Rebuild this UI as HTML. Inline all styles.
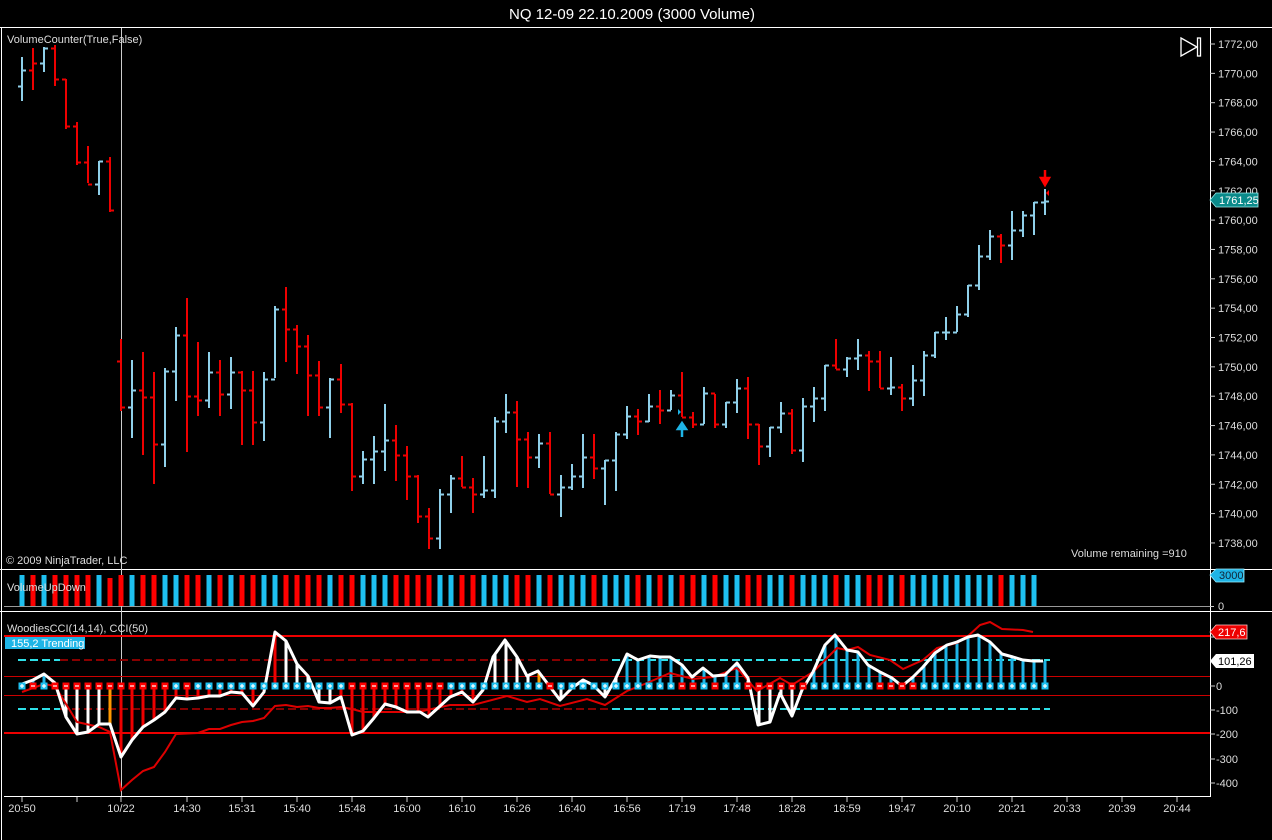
<!DOCTYPE html>
<html><head><meta charset="utf-8"><style>
html,body{margin:0;padding:0;background:#000;}
body{width:1272px;height:840px;overflow:hidden;position:relative;font-family:"Liberation Sans",Arial,sans-serif;}
svg{position:absolute;left:0;top:0;}
</style></head><body>
<svg id="s" width="1272" height="840" xmlns="http://www.w3.org/2000/svg" font-family="Liberation Sans, Arial, sans-serif">
<rect width="1272" height="840" fill="#000"/>
<text x="632" y="19" fill="#fff" font-size="15" text-anchor="middle">NQ 12-09  22.10.2009 (3000 Volume)</text>
<g stroke="#fff" stroke-width="1" fill="none">
<line x1="0" y1="27.5" x2="1272" y2="27.5"/>
<line x1="1.5" y1="27" x2="1.5" y2="840"/>
<line x1="0" y1="569.5" x2="1272" y2="569.5"/>
<line x1="0" y1="611.5" x2="1272" y2="611.5"/>
<line x1="1210.5" y1="28" x2="1210.5" y2="797"/>
<line x1="4" y1="796.5" x2="1211" y2="796.5"/>
</g>
<line x1="4" y1="606.5" x2="1210" y2="606.5" stroke="#999"/>
<line x1="121.5" y1="28" x2="121.5" y2="796" stroke="#ccc"/>
<g id="grid"></g>
<g id="bars"></g>
<g id="vol"></g>
<g id="cci"></g>
<g font-size="11" fill="#ddd">
<text x="7" y="43">VolumeCounter(True,False)</text>
<text x="6" y="564">© 2009 NinjaTrader, LLC</text>
<text x="1071" y="557">Volume remaining =910</text>
<text x="7" y="591">VolumeUpDown</text>
<text x="7" y="632">WoodiesCCI(14,14), CCI(50)</text>
</g>
<rect x="5" y="637" width="80" height="12" fill="#1eb4e6"/>
<text x="11" y="647" font-size="11" fill="#fff">155,2 Trending</text>
<g fill="none" stroke="#fff" stroke-width="1.3"><path d="M1181 38 L1197 47 L1181 56 Z"/><rect x="1197.5" y="38" width="3" height="18"/></g>
<g id="pax" font-size="11" fill="#ddd"></g>
<polygon points="1210,200 1216,193 1258,193 1258,207 1216,207" fill="#0a8a8a" stroke="#9ee" stroke-width="0.8"/>
<text x="1219" y="204" font-size="11" fill="#fff">1761,25</text>
<polygon points="1210,575 1216,569 1244,569 1244,582 1216,582" fill="#1eb4e6" stroke="#9ef" stroke-width="0.8"/>
<text x="1219" y="579" font-size="11" fill="#123">3000</text>
<line x1="1210" y1="606.5" x2="1214" y2="606.5" stroke="#ccc"/>
<text x="1218" y="610" font-size="11" fill="#ddd">0</text>
<g id="cax" font-size="11" fill="#ddd"></g>
<polygon points="1210,632 1216,625 1247,625 1247,639 1216,639" fill="#e00" stroke="#fcc" stroke-width="0.8"/>
<text x="1218" y="636" font-size="11" fill="#fff">217,6</text>
<polygon points="1210,661 1216,654 1254,654 1254,668 1216,668" fill="#fff"/>
<text x="1218" y="665" font-size="11" fill="#000">101,26</text>
<g id="xax" font-size="11" fill="#ddd"></g>
<path d="M1045 170 V179 M1041 178 L1045 185 L1049 178 Z" stroke="#f00" stroke-width="2.5" fill="#f00"/>
<path d="M1049 190 L1046 193 L1049 196 Z" fill="#f00"/>
<path d="M682 437 V428 M678 429 L682 423 L686 429 Z" stroke="#1eb4e6" stroke-width="2.5" fill="#1eb4e6"/>
<path d="M678 409 L681 412 L678 415 Z" fill="#1eb4e6"/>
</svg>
<script>
var NS="http://www.w3.org/2000/svg";
function el(p,t,a){var e=document.createElementNS(NS,t);for(var k in a)e.setAttribute(k,a[k]);p.appendChild(e);return e;}
var D=[[57,101,70,'b'],[48,90,63,'r'],[47,72,48,'b'],[45,86,79,'r'],[79,129,126,'r'],[122,165,162,'r'],[146,183,184,'r'],[161,195,161,'b'],[157,212,210,'r'],[339,411,407,'r'],[360,438,390,'b'],[352,455,397,'r'],[372,484,444,'r'],[368,467,371,'b'],[327,401,335,'b'],[298,452,396,'r'],[342,416,400,'r'],[352,408,372,'b'],[360,416,394,'r'],[357,409,372,'b'],[371,445,390,'r'],[371,445,422,'r'],[372,441,379,'b'],[306,378,309,'b'],[287,362,329,'r'],[325,374,346,'r'],[335,416,375,'r'],[361,416,407,'r'],[378,438,379,'b'],[364,413,404,'r'],[403,491,476,'r'],[451,484,459,'b'],[436,484,451,'b'],[404,471,440,'b'],[425,481,455,'r'],[446,500,476,'r'],[475,523,516,'r'],[508,549,538,'r'],[489,549,494,'b'],[475,513,478,'b'],[456,487,487,'r'],[478,513,494,'r'],[456,498,490,'b'],[417,498,421,'b'],[394,433,412,'b'],[401,487,439,'r'],[432,488,457,'r'],[434,468,443,'b'],[432,494,494,'r'],[475,517,487,'b'],[464,490,476,'b'],[434,488,457,'b'],[434,479,468,'r'],[460,505,460,'b'],[432,491,434,'b'],[406,439,416,'b'],[409,435,421,'r'],[394,422,406,'b'],[390,424,410,'r'],[390,410,395,'b'],[372,417,417,'r'],[412,428,424,'r'],[387,424,393,'b'],[394,428,424,'r'],[402,428,402,'b'],[379,413,388,'b'],[377,439,424,'r'],[424,465,446,'r'],[427,457,427,'b'],[402,433,413,'b'],[409,454,450,'r'],[398,462,406,'b'],[387,422,398,'b'],[365,411,365,'b'],[339,369,369,'r'],[357,377,358,'b'],[339,370,355,'b'],[351,391,361,'r'],[351,388,388,'r'],[357,395,387,'b'],[384,411,398,'r'],[365,406,380,'b'],[351,396,355,'b'],[332,358,332,'b'],[317,340,332,'b'],[306,332,314,'b'],[285,317,285,'b'],[245,290,256,'b'],[230,260,236,'b'],[234,263,245,'r'],[211,260,230,'b'],[211,237,215,'b'],[202,235,202,'b'],[189,215,201,'b']];
var B=document.getElementById('bars'),V=document.getElementById('vol');
for(var i=0;i<D.length;i++){var x=22+11*i,d=D[i],o=i==0?86:(i==9?361:D[i-1][2]);
var c=d[3]=='b'?'#8fd0ea':'#e00';
el(B,'line',{x1:x,y1:d[0],x2:x,y2:d[1],stroke:c,'stroke-width':2});
el(B,'line',{x1:x-4,y1:o+.5,x2:x,y2:o+.5,stroke:c,'stroke-width':2});
el(B,'line',{x1:x,y1:d[2]+.5,x2:x+4,y2:d[2]+.5,stroke:c,'stroke-width':2});
if(i<93){var vtop=(i==8)?578:575;el(V,'rect',{x:x-2.5,y:vtop,width:5,height:606-vtop,fill:d[3]=='b'?'#1ec0f0':'#f00'});}}
var P=document.getElementById('pax');
for(var k=0;k<18;k++){var y=44+k*29.35,p=1772-2*k;el(P,'line',{x1:1210,y1:y,x2:1215,y2:y,stroke:'#ccc'});var t=el(P,'text',{x:1218,y:y+4});t.textContent=p+',00';}
var CA=document.getElementById('cax');[[200,637],[100,661],[0,686],[-100,710],[-200,734],[-300,759],[-400,783]].forEach(function(a){el(CA,'line',{x1:1210,y1:a[1],x2:1215,y2:a[1],stroke:'#ccc'});if(a[0]!=200&&a[0]!=100){var t=el(CA,'text',{x:1216,y:a[1]+4});t.textContent=a[0];}});
var X=document.getElementById('xax');
[['20:50',22],['',77],['10/22',121],['14:30',187],['15:31',242],['15:40',297],['15:48',352],['16:00',407],['16:10',462],['16:26',517],['16:40',572],['16:56',627],['17:19',682],['17:48',737],['18:28',792],['18:59',847],['19:47',902],['20:10',957],['20:21',1012],['20:33',1067],['20:39',1122],['20:44',1177]].forEach(function(a){el(X,'line',{x1:a[1],y1:797,x2:a[1],y2:802,stroke:'#ccc'});if(a[0]){var t=el(X,'text',{x:a[1],y:812,'text-anchor':'middle'});t.textContent=a[0];}});
var C=document.getElementById('cci');
el(C,'line',{x1:4,y1:676.5,x2:1210,y2:676.5,stroke:'#c00','stroke-width':1});
el(C,'line',{x1:4,y1:695.5,x2:1210,y2:695.5,stroke:'#c00','stroke-width':1});
el(C,'line',{x1:60,y1:660,x2:612,y2:660,stroke:'#800','stroke-width':2,'stroke-dasharray':'8 4'});
el(C,'line',{x1:60,y1:709,x2:612,y2:709,stroke:'#800','stroke-width':2,'stroke-dasharray':'8 4'});
el(C,'line',{x1:612,y1:660,x2:1050,y2:660,stroke:'#2ee0e8','stroke-width':2,'stroke-dasharray':'8 4'});
el(C,'line',{x1:612,y1:709,x2:1050,y2:709,stroke:'#2ee0e8','stroke-width':2,'stroke-dasharray':'8 4'});
el(C,'line',{x1:18,y1:660,x2:60,y2:660,stroke:'#2ee0e8','stroke-width':2,'stroke-dasharray':'8 4'});
el(C,'line',{x1:18,y1:709,x2:60,y2:709,stroke:'#2ee0e8','stroke-width':2,'stroke-dasharray':'8 4'});
el(C,'line',{x1:4,y1:636,x2:1210,y2:636,stroke:'#e00','stroke-width':2});
el(C,'line',{x1:4,y1:733,x2:1210,y2:733,stroke:'#e00','stroke-width':2});
var W=[[22,684],[33,680],[44,674],[55,683],[66,717],[77,734],[88,732],[99,724],[110,724],[121,757],[132,740],[143,727],[154,720],[165,712],[176,698],[187,699],[198,698],[209,696],[220,696],[231,692],[242,693],[253,706],[264,692],[275,632],[286,641],[297,664],[308,676],[319,702],[330,703],[341,697],[352,735],[363,731],[374,718],[385,704],[396,707],[407,712],[420,712],[428,717],[450,697],[462,692],[473,702],[483,690],[493,657],[505,640],[517,657],[527,676],[538,671],[560,700],[572,688],[583,680],[593,685],[605,697],[615,680],[627,654],[638,660],[650,656],[660,657],[670,657],[682,665],[692,677],[703,668],[713,676],[725,675],[737,663],[748,678],[758,725],[770,722],[780,693],[792,716],[802,690],[813,672],[825,645],[835,635],[847,650],[858,652],[868,665],[880,672],[892,678],[902,686],[913,677],[923,667],[935,653],[947,645],[957,642],[968,637],[978,635],[990,642],[1002,654],[1013,657],[1023,660],[1033,661],[1043,661]];
var R=[[22,692],[44,684],[55,686],[77,722],[99,727],[110,732],[121,790],[132,780],[143,771],[154,767],[165,752],[176,734],[198,733],[209,729],[220,729],[231,725],[242,722],[253,721],[264,718],[275,706],[286,705],[297,707],[308,706],[319,708],[330,708],[341,707],[352,709],[363,712],[418,712],[450,705],[473,705],[507,696],[527,702],[540,699],[560,706],[587,699],[605,705],[627,691],[647,683],[670,673],[693,679],[713,677],[737,668],[757,691],[780,678],[792,685],[813,672],[837,648],[847,650],[858,647],[870,655],[890,660],[903,669],[923,660],[937,648],[957,643],[967,637],[980,625],[990,622],[1002,629],[1023,630],[1033,632]];
function interp(L,x){for(var j=0;j<L.length-1;j++){if(x>=L[j][0]&&x<=L[j+1][0]){var f=(x-L[j][0])/(L[j+1][0]-L[j][0]);return L[j][1]+f*(L[j+1][1]-L[j][1]);}}return L[L.length-1][1];}
function sq(i){if(i<4)return i%2==0;if(i<=13)return false;if(i==14)return true;if(i==15)return false;if(i<=29)return true;if(i<=38)return false;if(i<=47)return true;if(i==48)return false;if(i<=59)return true;if(i<=61)return false;if(i==62)return true;if(i==63)return false;if(i<=65)return true;if(i<=71)return false;if(i<=77)return true;if(i<=81)return false;return true;}
function hc(i){if(i<4)return '#1eb4e6';if(i<=7)return '#fff';if(i==8)return '#f90';if(i<=23)return '#e00';if(i<=28)return '#fff';if(i<=42)return '#e00';if(i<=46)return '#fff';if(i==47)return '#f90';if(i<=54)return '#fff';if(i<=65)return '#1eb4e6';if(i<=71)return '#fff';return '#1eb4e6';}
for(var i=0;i<94;i++){var x=22+11*i,y=interp(W,x);el(C,'line',{x1:x,y1:686,x2:x,y2:y,stroke:hc(i),'stroke-width':3});}
el(C,'polyline',{points:R.map(function(p){return p.join(',')}).join(' '),fill:'none',stroke:'#d00','stroke-width':2});
el(C,'polyline',{points:W.map(function(p){return p.join(',')}).join(' '),fill:'none',stroke:'#fff','stroke-width':3,'stroke-linejoin':'round'});
for(var i=0;i<94;i++){var x=22+11*i,p=sq(i);el(C,'rect',{x:x-3.5,y:682.5,width:7,height:7,fill:p?'#1ec0f0':'#f00'});
el(C,'line',{x1:x-2,y1:686,x2:x+2,y2:686,stroke:'#fff','stroke-width':1.2});if(p)el(C,'line',{x1:x,y1:684,x2:x,y2:688,stroke:'#fff','stroke-width':1.2});}
</script>
</body></html>
